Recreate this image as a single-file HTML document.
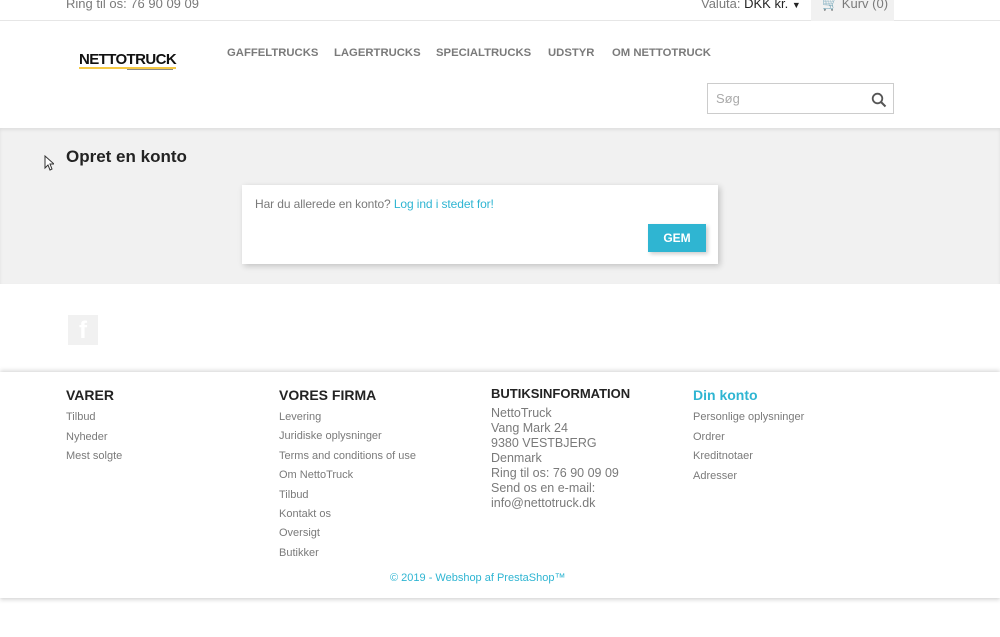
<!DOCTYPE html>
<html><head><meta charset="utf-8"><style>
*{margin:0;padding:0;box-sizing:border-box}
body{width:1000px;height:637px;overflow:hidden;background:#fff;font-family:"Liberation Sans",sans-serif;color:#7a7a7a;position:relative}
.a{position:absolute;white-space:nowrap}
.n{position:absolute;top:47px;font-size:11.3px;font-weight:bold;color:#7a7a7a;white-space:nowrap}
</style></head><body>
<div class="a" style="left:0;top:0;width:1000px;height:21px;border-bottom:1px solid #e6e6e6"></div>
<div class="a" style="left:66px;top:-4px;font-size:13px;color:#7a7a7a">Ring til os: 76 90 09 09</div>
<div class="a" style="left:701px;top:-4px;font-size:13px;color:#7a7a7a">Valuta: <span style="color:#232323">DKK kr.</span> <span style="font-size:9px;color:#232323">▼</span></div>
<div class="a" style="left:811px;top:0;width:83px;height:21px;background:#f1f1f1"></div>
<div class="a" style="left:822px;top:-4px;font-size:13px;color:#7a7a7a"><span style="color:#555">🛒</span> Kurv (0)</div>
<div class="a" style="left:79px;top:52px;font-size:15px;font-weight:bold;color:#111;letter-spacing:-0.6px;border-bottom:2px solid #f5c842;line-height:15px">NETTOTRUCK</div>
<div class="a" style="left:127px;top:69px;width:46px;height:1px;background:#888"></div>
<div class="n" style="left:227px">GAFFELTRUCKS</div>
<div class="n" style="left:334px">LAGERTRUCKS</div>
<div class="n" style="left:436px">SPECIALTRUCKS</div>
<div class="n" style="left:548px">UDSTYR</div>
<div class="n" style="left:612px">OM NETTOTRUCK</div>
<div class="a" style="left:707px;top:83px;width:187px;height:31px;border:1px solid #ccc"></div>
<div class="a" style="left:716px;top:91px;font-size:13px;color:#aaa">Søg</div>
<svg class="a" style="left:871px;top:92px" width="16" height="16" viewBox="0 0 16 16"><circle cx="6.5" cy="6.5" r="4.8" fill="none" stroke="#555" stroke-width="1.8"/><path d="M10 10l4.5 4.5" stroke="#555" stroke-width="2"/></svg>
<div class="a" style="left:0;top:128px;width:1000px;height:156px;background:#f1f1f1;box-shadow:inset 0 2px 3px rgba(0,0,0,.08)"></div>
<div class="a" style="left:66px;top:147px;font-size:17px;font-weight:bold;color:#232323">Opret en konto</div>
<div class="a" style="left:242px;top:185px;width:476px;height:79px;background:#fff;box-shadow:2px 2px 6px rgba(0,0,0,.2)"></div>
<div class="a" style="left:255px;top:197px;font-size:12px;color:#7a7a7a;letter-spacing:-0.1px">Har du allerede en konto? <span style="color:#2fb5d2">Log ind i stedet for!</span></div>
<div class="a" style="left:648px;top:224px;width:58px;height:28px;background:#2fb5d2;color:#fff;font-weight:bold;font-size:12px;text-align:center;line-height:28px;box-shadow:2px 2px 4px rgba(0,0,0,.2)">GEM</div>
<div class="a" style="left:68px;top:315px;width:30px;height:30px;background:#f1f1f1;color:#fff;font-weight:bold;font-size:24px;text-align:center;line-height:32px">f</div>
<div class="a" style="left:0;top:372px;width:1000px;height:226px;background:#fff;box-shadow:0 -2px 4px rgba(0,0,0,.12),0 2px 4px rgba(0,0,0,.15)"></div>
<div class="a" style="left:66px;top:387px;font-size:14px;font-weight:bold;color:#232323">VARER</div>
<div class="a" style="left:66px;top:408px;font-size:11px;line-height:19.5px;color:#7a7a7a">Tilbud<br>Nyheder<br>Mest solgte</div>
<div class="a" style="left:279px;top:387px;font-size:14px;font-weight:bold;color:#232323">VORES FIRMA</div>
<div class="a" style="left:279px;top:408px;font-size:11px;line-height:19.4px;color:#7a7a7a">Levering<br>Juridiske oplysninger<br>Terms and conditions of use<br>Om NettoTruck<br>Tilbud<br>Kontakt os<br>Oversigt<br>Butikker</div>
<div class="a" style="left:491px;top:386px;font-size:13px;font-weight:bold;color:#232323">BUTIKSINFORMATION</div>
<div class="a" style="left:491px;top:406px;font-size:12.5px;line-height:15px;color:#7a7a7a">NettoTruck<br>Vang Mark 24<br>9380 VESTBJERG<br>Denmark<br>Ring til os: 76 90 09 09<br>Send os en e-mail:<br>info@nettotruck.dk</div>
<div class="a" style="left:693px;top:387px;font-size:14px;font-weight:bold;color:#2fb5d2">Din konto</div>
<div class="a" style="left:693px;top:408px;font-size:11px;line-height:19.5px;color:#7a7a7a">Personlige oplysninger<br>Ordrer<br>Kreditnotaer<br>Adresser</div>
<div class="a" style="left:390px;top:572px;font-size:11px;color:#2fb5d2">© 2019 - Webshop af PrestaShop™</div>
<svg class="a" style="left:44px;top:155px" width="10" height="16" viewBox="0 0 10 16"><path d="M1 1v12l3-3 2 5 2-1-2-5h4z" fill="#fff" stroke="#333" stroke-width="1"/></svg>
</body></html>
